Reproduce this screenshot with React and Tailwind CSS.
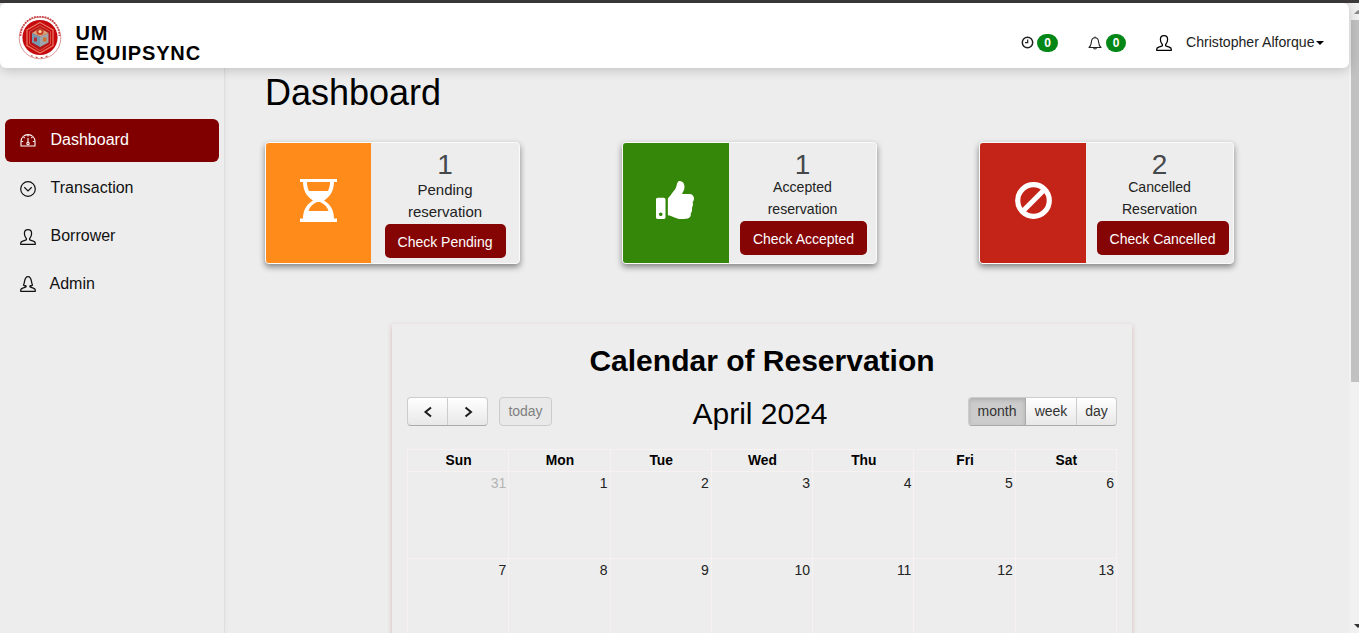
import { FaThumbsUp } from "react-icons/fa";

function Seal() {
  return (
    <svg className="h-[44px] w-[44px]" viewBox="0 0 44 44">
      <circle cx="22" cy="22" r="20.800" fill="#fff" stroke="#d0686a" strokeWidth="0.700" />
      <path d="M2.500 20A19.500 19.500 0 0 1 41.500 20" fill="none" stroke="#c94448" strokeWidth="1.800" strokeDasharray="1.800 0.900" />
      <path d="M13 39.500A19.800 19.800 0 0 0 31 39.500" fill="none" stroke="#c95b50" strokeWidth="1.200" strokeDasharray="2 3" />
      <circle cx="22" cy="21.500" r="17.600" fill="#c40a0e" />
      <path d="M22 6.500 35 14v15.500L22 37 9 29.500V14z" fill="none" stroke="#e8745c" strokeWidth="1.300" />
      <path d="M22 9.500 32.500 15.500v12.600L22 34.500 11.500 28.100V15.500z" fill="#b31518" stroke="#e05a45" strokeWidth="0.900" />
      <path d="M14 17 22 20.500v10.500l-8-4.500z" fill="#7499b0" />
      <path d="M22 20.500 30.500 17v9.500L22 31z" fill="#9fa5aa" />
      <path d="m22 12 8.500 5-8.500 3.500L14 17z" fill="#d9a679" />
      <circle cx="22" cy="15.500" r="3.600" fill="#c93b25" />
      <circle cx="22" cy="15.500" r="1.600" fill="#f7d79a" />
      <path d="M16 21.500h3v4h-3z" fill="#b52b32" />
      <path d="M25 21.500h3.500v4H25z" fill="#d0702c" />
    </svg>
  );
}

const ClockIcon = () => (
  <svg className="-mt-[2px] h-[13px] w-[13px]" viewBox="0 0 13 13" fill="none" stroke="#222">
    <circle cx="6.500" cy="6.500" r="5.200" strokeWidth="1.500" />
    <path d="M6.700 3.500v3.200H4" strokeWidth="1.200" />
  </svg>
);

const BellIcon = ({ className }) => (
  <svg className={className} viewBox="0 0 14 14" fill="none" stroke="#222" strokeWidth="1.100" strokeLinejoin="round">
    <path d="M1 11.500h12c-1.600-1.200-2.100-2.500-2.300-5C10.500 3.500 9.300 1.800 7 1.800S3.500 3.500 3.300 6.500c-.2 2.500-.7 3.800-2.300 5z" />
    <path d="M7 .4v1.400M5.500 11.800c.2 1.500 2.800 1.500 3 0" />
  </svg>
);

const UserIcon = ({ className }) => (
  <svg className={className} viewBox="0 0 16 16" fill="none" stroke="currentColor" strokeWidth="1.250" strokeLinejoin="round">
    <path d="M.7 15.300v-1c0-1.100.8-1.700 2-2.100l3-1c.9-.3.900-1.300.4-2C5.200 8 4.400 6.500 4.400 4.400 4.400 2 5.900.7 8 .7s3.600 1.300 3.600 3.700c0 2.100-.8 3.600-1.700 4.800-.5.700-.5 1.700.4 2l3 1c1.200.4 2 1 2 2.100v1z" />
  </svg>
);

const AdminIcon = ({ className }) => (
  <svg className={className} viewBox="0 0 16 16" fill="none" stroke="currentColor" strokeWidth="1.250" strokeLinejoin="round">
    <path d="M.7 15.300v-1c0-1.100.8-1.700 2-2.100l2.800-1c.9-.4.700-1.200.3-1.500-.8.300-1.700 0-2.300-.7C4.900 7.500 3.800.7 8 .7s3.100 6.800 4.500 8.300c-.6.700-1.500 1-2.300.7-.4.3-.6 1.100.3 1.500l2.800 1c1.200.4 2 1 2 2.100v1z" />
  </svg>
);

const DashboardIcon = ({ className }) => (
  <svg className={className} viewBox="0 0 16 16" fill="none" stroke="currentColor" strokeWidth="1.100" strokeLinejoin="round">
    <path d="M1 14V9.500C1.200 5.500 4 2.600 8 2.600s6.800 2.900 7 6.900V14z" />
    <path d="M8 6v4.500M8 3v1.500M1.500 9.500h1.700M12.800 9.500h1.700M3.600 5l1 1M12.400 5l-1 1" />
    <circle cx="8" cy="11.500" r="1.200" />
  </svg>
);

const TransactionIcon = ({ className }) => (
  <svg className={className} viewBox="0 0 16 16" fill="none" stroke="currentColor" strokeWidth="1.200">
    <circle cx="8" cy="8" r="7.300" />
    <path d="M4.300 6.300 8 9.900l3.700-3.600" />
  </svg>
);

const Hourglass = () => (
  <svg className="h-[43px] w-[37px]" viewBox="0 0 37 43">
    <path fill="#fff" d="M0 0h37v3H0zM0 39.500h37V43H0z" />
    <path fill="#fff" fillRule="evenodd" d="M3 2h31c0 9-3 15-10 19.500 7 4.500 10 10 10 18.500H3c0-8.500 3-14 10-18.500C6 17 3 11 3 2zm4 1c0 3 .5 6 2 9h19c1.500-3 2-6 2-9zm10 20c-4.500 2-7.500 5-8.500 9h20c-1-4-4-7-8.500-9z" />
  </svg>
);

const Ban = () => (
  <svg className="h-[37px] w-[37px]" viewBox="0 0 37 37" fill="none" stroke="#fff" strokeWidth="5.200">
    <circle cx="18.500" cy="18.500" r="15.800" />
    <path d="M7.500 29.500 29.500 7.500" />
  </svg>
);

const Caret = ({ className }) => (
  <svg className={className} viewBox="0 0 8 4">
    <path d="M0 0h8L4 4z" fill="currentColor" />
  </svg>
);

const Badge = ({ className }) => (
  <span className={`flex h-[18px] items-center justify-center rounded-full bg-[#058717] text-[12px] font-bold text-white ${className}`}>0</span>
);

function Header() {
  return (
    <header className="relative z-10 flex h-[65px] w-[1349px] shrink-0 rounded-md bg-white shadow-[0_2px_12px_rgba(0,0,0,0.2)]">
      <div className="flex pl-[18px] pt-[13px]">
        <Seal />
        <h1 className="ml-[13.500px] mt-[7px] text-[20px] leading-5 font-bold tracking-[0.850px] text-black">
          UM<br />EQUIPSYNC
        </h1>
      </div>
      <div className="ml-auto mt-[31px] flex h-[18px] items-center pr-[25px] text-black">
        <ClockIcon />
        <Badge className="ml-[3px] w-[21px]" />
        <BellIcon className="ml-[30px] -mt-px h-[14px] w-[14px]" />
        <Badge className="ml-1 w-5" />
        <UserIcon className="ml-[30px] h-4 w-4" />
        <span className="ml-[14px] w-[128px] -mt-[2px] text-[14.100px] leading-[18px] whitespace-nowrap text-[#222]">Christopher Alforque</span>
        <Caret className="ml-[2px] h-1 w-2" />
      </div>
    </header>
  );
}

const nav = [
  { label: "Dashboard", Icon: DashboardIcon, active: true, iconPos: "-mt-px" },
  { label: "Transaction", Icon: TransactionIcon, iconPos: "mt-px" },
  { label: "Borrower", Icon: UserIcon, iconPos: "mt-px" },
  { label: "Admin", Icon: AdminIcon, iconPos: "-mt-px" },
];

function Sidebar() {
  return (
    <aside className="w-[225px] shrink-0 border-r border-[#dedede] pt-[51px] pl-[5px] shadow-[3px_0_5px_rgba(0,0,0,0.02)]">
      <nav className="flex flex-col gap-[5px]">
        {nav.map(({ label, Icon, active, iconPos }) => (
          <a key={label} className={`flex h-[43px] w-[214px] items-center rounded-md pl-[15px] text-[16px] ${active ? "bg-[#800000] text-white" : "text-[#111]"}`}>
            <Icon className={`h-4 w-4 ${iconPos}`} />
            <span className={`-mt-[2px] ${label === "Admin" ? "ml-[13.500px]" : "ml-[14.500px]"}`}>{label}</span>
          </a>
        ))}
      </nav>
    </aside>
  );
}

const stats = [
  { count: 1, lines: ["Pending", "reservation"], button: "Check Pending", icon: <Hourglass />, color: "bg-[#ff8b1a]", pane: "w-[105px]", countH: "h-[34px]", text: "text-[15px]", btn: "w-[121px]" },
  { count: 1, lines: ["Accepted", "reservation"], button: "Check Accepted", icon: <FaThumbsUp className="h-[38px] w-[38px] -translate-x-px text-white" />, color: "bg-[#35870a]", pane: "w-[106px]", countH: "h-[31px]", text: "text-[14.100px]", btn: "w-[127px] ml-[2px]" },
  { count: 2, lines: ["Cancelled", "Reservation"], button: "Check Cancelled", icon: <Ban />, color: "bg-[#c42318]", pane: "w-[106px]", countH: "h-[31px]", text: "text-[14.100px]", btn: "w-[132px] ml-[6px]" },
];

function StatCard({ s }) {
  return (
    <section className="flex h-[122px] w-[255px] overflow-hidden rounded border border-[#fafafa] bg-[#ededed] shadow-[0_3px_6px_rgba(0,0,0,0.45)]">
      <div className={`flex shrink-0 items-center justify-center pb-[6px] ${s.color} ${s.pane}`}>{s.icon}</div>
      <div className="flex grow flex-col items-center pt-[2px]">
        <div className={`pt-[2px] text-[28px] leading-[36px] text-[#45494c] ${s.countH}`}>{s.count}</div>
        {s.lines.map((line) => (
          <div key={line} className={`leading-[22px] text-[#222] ${s.text}`}>{line}</div>
        ))}
        <div className={`mt-px flex h-[34px] shrink-0 items-center justify-center rounded-[5px] bg-[#850505] pt-[2px] text-[14px] text-white ${s.btn}`}>{s.button}</div>
      </div>
    </section>
  );
}

const days = ["Sun", "Mon", "Tue", "Wed", "Thu", "Fri", "Sat"];
const weeks = [
  [31, 1, 2, 3, 4, 5, 6],
  [7, 8, 9, 10, 11, 12, 13],
];

const Chevron = ({ d }) => (
  <svg className="h-3 w-[10px]" viewBox="0 0 10 12" fill="none" stroke="#1c1c1c" strokeWidth="2">
    <path d={d} />
  </svg>
);

function Calendar() {
  return (
    <section className="ml-[127px] mt-[60px] h-[500px] w-[740px] px-[15px] shadow-[0_2px_5px_rgba(150,20,40,0.24)]">
      <h2 className="pt-[17px] text-center text-[30px] leading-[40px] font-bold text-black">Calendar of Reservation</h2>
      <div className="mt-[16px] flex h-[30px] items-start justify-between text-[14px] text-[#333]">
        <div className="flex w-[149px]">
          <div className="flex h-[29px] w-[81px] overflow-hidden rounded border border-[#ccc] border-b-[#aaa] bg-gradient-to-b from-white to-[#e8e8e8]">
            <div className="flex w-10 items-center justify-center border-r border-[#ccc]"><Chevron d="M8 1.500 2.500 6 8 10.500" /></div>
            <div className="flex grow items-center justify-center pl-[2px]"><Chevron d="M1.500 1.500 7 6l-5.500 4.500" /></div>
          </div>
          <div className="ml-[11px] flex h-[29px] w-[53px] items-center justify-center rounded border border-[#ccc] bg-[#e9e9e9] text-[#808080]">today</div>
        </div>
        <div className="mt-[-1px] -translate-x-[2px] text-[30px] leading-[36px] text-black">April 2024</div>
        <div className="flex h-[29px] w-[149px] overflow-hidden rounded border border-[#ccc] border-b-[#aaa] bg-gradient-to-b from-white to-[#e8e8e8]">
          <div className="flex w-[57px] items-center justify-center border-r border-[#aaa] bg-[#ccc] shadow-[inset_0_2px_4px_rgba(0,0,0,0.15)]">month</div>
          <div className="flex w-[51px] items-center justify-center border-r border-[#ccc]">week</div>
          <div className="flex grow items-center justify-center">day</div>
        </div>
      </div>
      <div className="mt-[22px] border-t border-l border-[#f8f1f1] text-[14px] text-[#222]">
        <div className="grid grid-cols-7 border-b border-[#f8f1f1]">
          {days.map((d) => (
            <div key={d} className="h-[21px] border-r border-[#f8f1f1] pt-px pl-px text-center text-[13.800px] leading-5 font-bold text-black">{d}</div>
          ))}
        </div>
        {weeks.map((week) => (
          <div key={week[0]} className="grid grid-cols-7 border-b border-[#f8f1f1]">
            {week.map((n) => (
              <div key={n} className={`h-[86px] border-r border-[#f8f1f1] pt-px pr-[2px] text-right leading-5 ${n === 31 ? "text-[#b4b4b4]" : ""}`}>{n}</div>
            ))}
          </div>
        ))}
      </div>
    </section>
  );
}

export default function App() {
  return (
    <div className="flex h-[633px] w-[1359px] flex-col overflow-hidden bg-[#ededed] font-['Liberation_Sans',Arial,sans-serif]">
      <div className="h-[3px] shrink-0 bg-[#3c3a3b]" />
      <div className="flex min-h-0 grow">
        <div className="flex w-[1349px] flex-col">
          <Header />
          <div className="flex min-h-0 grow">
            <Sidebar />
            <main className="grow pl-[40px]">
              <h1 className="mt-[1px] h-[48px] text-[36px] leading-[48px] text-black">Dashboard</h1>
              <div className="mt-[25px] flex gap-[102px]">
                {stats.map((s) => <StatCard key={s.button} s={s} />)}
              </div>
              <Calendar />
            </main>
          </div>
        </div>
        <div className="flex w-[10px] flex-col overflow-hidden bg-[#f1f1f1]">
          <Caret className="mt-[7px] ml-[5px] h-1 w-2 shrink-0 rotate-180 text-[#888]" />
          <div className="mt-[6px] ml-[2px] h-[362px] w-2 bg-[#c1c1c1]" />
          <Caret className="mt-auto mb-[5px] ml-[5px] h-1 w-2 shrink-0 text-[#333]" />
        </div>
      </div>
    </div>
  );
}
